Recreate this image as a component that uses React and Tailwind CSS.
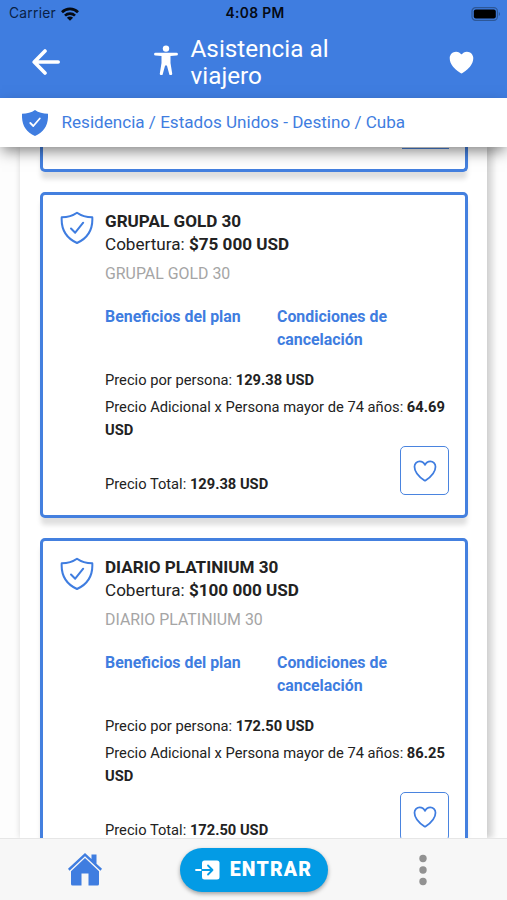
import { IoHeart, IoHeartOutline } from "react-icons/io5";

const plans = [
  { name: "GRUPAL GOLD 30", coverage: "$75 000 USD", price: "129.38 USD", extra: "64.69 USD" },
  { name: "DIARIO PLATINIUM 30", coverage: "$100 000 USD", price: "172.50 USD", extra: "86.25 USD" },
];

const StatusBar = () => (
  <div className="grid h-[27px] grid-cols-3 items-center pl-[9px] pr-[6px] font-['Inter',sans-serif] text-[13.8px] text-[#0a1f45]">
    <div className="flex items-center gap-[5px]">
      <span className="tracking-[0.25px]">Carrier</span>
      <svg viewBox="0 0 18 14" className="h-[14px] w-[18px]" fill="none" stroke="#050a14" strokeWidth="2.7">
        <path d="M1 5.2a11.4 11.4 0 0 1 16 0" />
        <path d="M4 8.6a7.1 7.1 0 0 1 10 0" />
        <path d="M9 13.8 5.9 10.7a4.4 4.4 0 0 1 6.2 0z" fill="#050a14" stroke="none" />
      </svg>
    </div>
    <span className="text-center font-semibold tracking-[0.35px] text-[#050a14]">4:08 PM</span>
    <svg viewBox="0 0 30 14" className="h-[14px] w-[30px] justify-self-end">
      <rect x="1" y="0.7" width="25.4" height="12.6" rx="3.6" fill="none" stroke="#2d5797" strokeWidth="1.2" />
      <rect x="2.8" y="2.6" width="22" height="8.8" rx="2" fill="#000" />
      <path d="M27.8 5v4c1.6-.5 1.6-3.5 0-4z" fill="#2d5797" />
    </svg>
  </div>
);

const Header = () => (
  <header className="h-[98px] shrink-0 bg-[#3f7de0]">
    <StatusBar />
    <div className="mt-px flex h-[68px] items-center pl-8 pr-[31px] text-white">
      <svg viewBox="0 0 28 26" className="h-[26px] w-7" fill="none" stroke="currentColor" strokeWidth="3.6" strokeLinecap="round" strokeLinejoin="round">
        <path d="M13 2 2.2 13 13 24M2.8 13h23.4" />
      </svg>
      <svg viewBox="0 0 24 30" className="ml-[94px] mt-[-5px] h-[30px] w-6" fill="currentColor">
        <circle cx="12" cy="3.6" r="3.2" />
        <path d="M1.5 7.7h21a1.4 1.4 0 0 1 0 2.9l-6 .4v7l1.7 10.4a1.5 1.5 0 0 1-3 .5L12.9 20.5h-1.8L8.8 28.9a1.5 1.5 0 0 1-3-.5L7.5 18v-7l-6-.4a1.4 1.4 0 0 1 0-2.9z" />
      </svg>
      <h1 className="ml-[12.5px] w-[170px] text-[24.3px] leading-[27px]">Asistencia al viajero</h1>
      <IoHeart className="ml-auto h-[29px] w-[29px]" />
    </div>
  </header>
);

const RouteBar = () => (
  <div className="relative z-10 flex h-[49px] shrink-0 items-center bg-white pl-[22px] text-[#3f7de0] shadow-[0_6px_14px_-2px_rgba(0,0,0,0.5)]">
    <svg viewBox="0 0 26 26" className="h-[26px] w-[26px]">
      <path d="M13 0c3.5 2.500 8 3.700 13 3.700C26.500 15 22.500 21.500 13 26 3.500 21.500-.5 15 0 3.700 5 3.700 9.500 2.500 13 0z" fill="currentColor" />
      <path d="m8.300 13 3 3 6.500-7.500" fill="none" stroke="#fff" strokeWidth="1.8" strokeLinecap="round" strokeLinejoin="round" />
    </svg>
    <span className="ml-[13.5px] text-[17.1px]">Residencia / Estados Unidos - Destino / Cuba</span>
  </div>
);

const FavoriteButton = () => (
  <button className="flex h-[49px] w-[49px] items-center justify-center rounded-[5px] border border-solid border-[#4a84df]">
    <IoHeartOutline className="h-7 w-7 text-[#3f7de0]" />
  </button>
);

const PlanCard = ({ plan }) => (
  <article className="flex h-[326px] shrink-0 rounded-[5px] border-[3px] border-[#4480df] bg-white pl-[17px] pr-4 pt-[15px] shadow-[0_8px_5px_-1px_rgba(0,0,0,0.13)]">
    <svg viewBox="0 0 34 34" className="mt-[1px] h-[34px] w-[34px] shrink-0" fill="none" stroke="#3f7de0" strokeWidth="2" strokeLinecap="round" strokeLinejoin="round">
      <path d="M17 1.7c4 2.900 9.500 4.500 15.300 4.600C33 19 28 27 17 32 6 27 1 19 1.700 6.300 7.500 6.200 13 4.600 17 1.700z" />
      <path d="m11 17.5 4.200 4.200 8-10" />
    </svg>
    <div className="ml-[11px] flex-1 text-[#222]">
      <h2 className="text-[17.1px] font-bold leading-[23px]">{plan.name}</h2>
      <p className="text-[17.1px] leading-[23px]">
        Cobertura: <b>{plan.coverage}</b>
      </p>
      <p className="mt-1.5 text-[15.9px] leading-[23px] text-[#a5a5a5]">{plan.name}</p>
      <div className="mt-5 grid grid-cols-2 text-[15.9px] font-bold leading-[23px] text-[#3f7de0]">
        <a>Beneficios del plan</a>
        <a className="w-[130px]">Condiciones de cancelación</a>
      </div>
      <p className="mt-[18px] text-[14.7px] leading-[23px]">
        Precio por persona: <b>{plan.price}</b>
      </p>
      <p className="mt-1 text-[14.7px] leading-[23px]">
        Precio Adicional x Persona mayor de 74 años: <b>{plan.extra}</b>
      </p>
      <div className="mt-1 flex justify-between">
        <p className="mt-[27px] text-[14.7px] leading-[23px]">
          Precio Total: <b>{plan.price}</b>
        </p>
        <FavoriteButton />
      </div>
    </div>
  </article>
);

const BottomBar = () => (
  <nav className="relative z-10 grid h-[62px] shrink-0 grid-cols-3 items-center border-t border-[#e6e6e6] bg-[#f7f7f7]">
    <svg viewBox="0 0 34 33" className="h-[33px] w-[34px] justify-self-center" fill="#3f7de0">
      <path d="M17 0 0 15.800l1.500 1.900L17 3.300l15.500 14.400L34 15.800l-5.500-5.100V1.500h-5v4.600z" />
      <path d="M17 5 3 18.300V31a1.500 1.500 0 0 0 1.500 1.500H13.500v-12h7v12h9A1.500 1.500 0 0 0 31 31V18.300z" />
    </svg>
    <button className="flex h-[44px] w-[148px] items-center justify-center gap-[10px] justify-self-center rounded-full bg-[#039be5] text-[19.5px] font-black tracking-[1.2px] text-white shadow-[0_2px_4px_rgba(0,0,0,0.35)]">
      <svg viewBox="0 0 25 20" className="h-5 w-[25px]" fill="none" strokeLinecap="round" strokeLinejoin="round">
        <rect x="7" y="0.5" width="17.5" height="19" rx="2.5" fill="#fff" />
        <path d="M1 10h6" stroke="#fff" strokeWidth="1.8" />
        <path d="M7 10h10.500M13 5.500l4.500 4.500-4.500 4.500" stroke="#039be5" strokeWidth="1.8" />
      </svg>
      ENTRAR
    </button>
    <svg viewBox="0 0 8 32" className="h-8 w-2 justify-self-center" fill="#929292">
      <circle cx="4" cy="4.5" r="3.7" />
      <circle cx="4" cy="16" r="3.7" />
      <circle cx="4" cy="27.5" r="3.7" />
    </svg>
  </nav>
);

export default function App() {
  return (
    <div className="flex h-[900px] w-[507px] flex-col overflow-hidden bg-[#fdfdfd] font-['Roboto',sans-serif]">
      <Header />
      <RouteBar />
      <main className="min-h-0 flex-1 overflow-hidden px-5">
        <div className="flex h-full flex-col gap-5 bg-white pl-5 pr-[19px] shadow-[7px_0_5px_rgba(0,0,0,0.11),0_0_6px_rgba(0,0,0,0.15)]">
          {/* tail of the card scrolled under the route bar */}
          <div className="flex h-[25px] shrink-0 items-start justify-end rounded-b-[5px] border-[3px] border-t-0 border-[#4480df] bg-white pr-4 shadow-[0_8px_5px_-1px_rgba(0,0,0,0.13)]">
            <div className="h-[2px] w-[47px] border-b border-[#4a84df]" />
          </div>
          {plans.map((plan) => (
            <PlanCard key={plan.name} plan={plan} />
          ))}
        </div>
      </main>
      <BottomBar />
    </div>
  );
}
